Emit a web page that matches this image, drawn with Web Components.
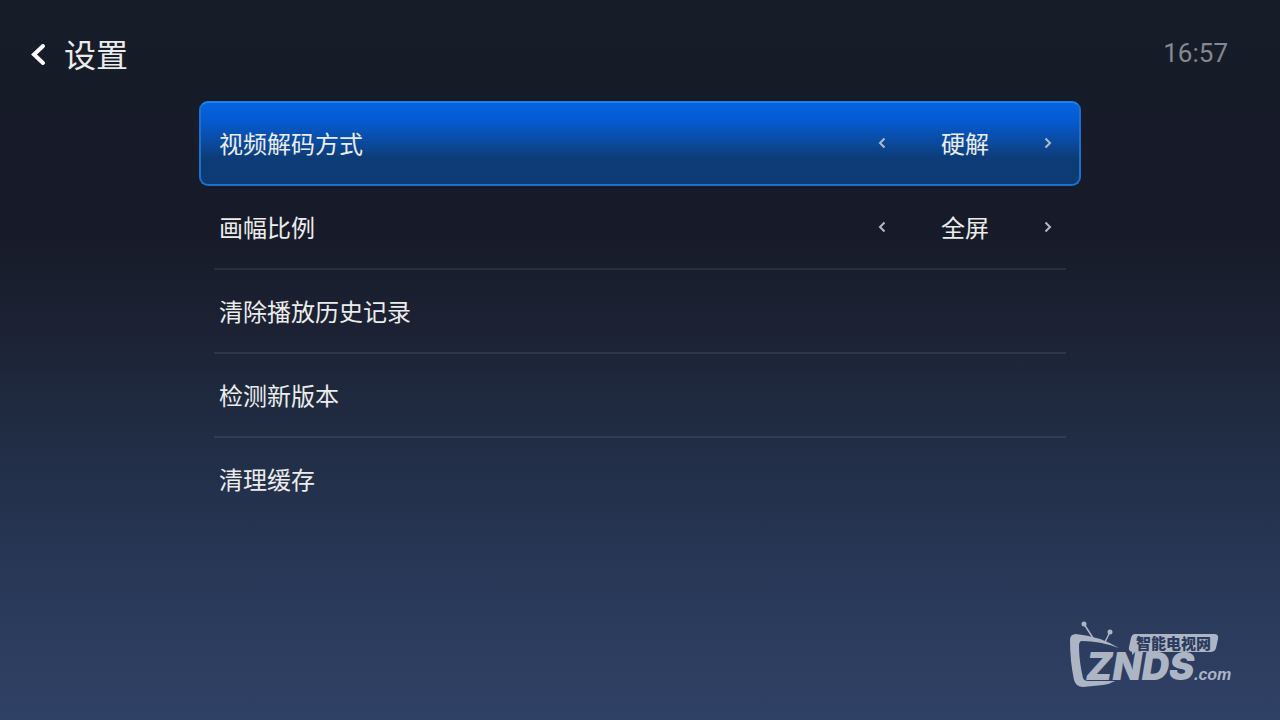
<!DOCTYPE html>
<html lang="zh-CN">
<head>
<meta charset="utf-8">
<meta name="viewport" content="width=device-width, initial-scale=1">
<title>设置</title>
<style>
  body {
    margin: 0;
    background: #171c29;
    color: #ececec;
    font-family: Roboto, 'Noto Sans CJK SC', sans-serif;
  }
</style>
</head>
<body>
<tv-screen>
  <tv-header slot="header" heading="设置" time="16:57"></tv-header>
  <setting-row label="视频解码方式" options="硬解,软解" selected></setting-row>
  <setting-row label="画幅比例" options="全屏,原始"></setting-row>
  <setting-row label="清除播放历史记录"></setting-row>
  <setting-row label="检测新版本"></setting-row>
  <setting-row label="清理缓存" last></setting-row>
  <znds-logo slot="footer"></znds-logo>
</tv-screen>

<script>
class TvScreen extends HTMLElement {
  constructor() {
    super();
    this.attachShadow({ mode: 'open' });
    this.shadowRoot.innerHTML = `
      <style>
        :host {
          display: flex;
          flex-direction: column;
          box-sizing: border-box;
          min-height: 100vh;
          background: linear-gradient(#171c29 0%, #171b29 32%, #1c2234 46%, #1f2a3f 56%, #24324e 70%, #2b3b5c 86%, #304166 100%);
        }

        main {
          display: flex;
          flex-direction: column;
          box-sizing: border-box;
          width: 100%;
          max-width: 882px;
          margin: 0 auto;
        }

        footer {
          display: flex;
          justify-content: flex-end;
          margin-top: auto;
          padding: 0 44px 32px;
        }
      </style>
      <slot name="header"></slot>
      <main><slot></slot></main>
      <footer><slot name="footer"></slot></footer>
    `;
  }
}

class TvHeader extends HTMLElement {
  constructor() {
    super();
    this.attachShadow({ mode: 'open' });
  }

  connectedCallback() {
    this.shadowRoot.innerHTML = `
      <style>
        :host {
          display: flex;
          align-items: center;
          justify-content: space-between;
          box-sizing: border-box;
          height: 101px;
          padding: 0 52px 0 28px;
        }

        .title {
          display: flex;
          align-items: center;
          gap: 16px;
          padding-top: 8px;
        }

        button {
          display: flex;
          padding: 0 0 2px;
          border: none;
          background: none;
          color: #fff;
          cursor: pointer;
        }

        h1 {
          margin: 0;
          padding-top: 2px;
          font-size: 32px;
          font-weight: 400;
          line-height: 40px;
        }

        time {
          padding-top: 4px;
          color: #85888f;
          font-size: 26px;
          line-height: 32px;
        }
      </style>
      <div class="title">
        <button type="button" aria-label="返回">
          <svg width="20" height="24" viewBox="0 0 20 24">
            <path d="M15 4 L6 12.500 L15 21" fill="none" stroke="currentColor" stroke-width="4" stroke-linecap="round" stroke-linejoin="miter"/>
          </svg>
        </button>
        <h1>${this.getAttribute('heading')}</h1>
      </div>
      <time>${this.getAttribute('time')}</time>
    `;
  }
}

class OptionPicker extends HTMLElement {
  constructor() {
    super();
    this._options = [];
    this._index = 0;
    this.attachShadow({ mode: 'open' });
    this.shadowRoot.innerHTML = `
      <style>
        :host {
          display: flex;
          align-items: center;
          justify-content: space-between;
          width: 190px;
        }

        button {
          display: flex;
          align-items: center;
          justify-content: center;
          width: 24px;
          height: 32px;
          padding: 0 0 4px;
          border: none;
          background: none;
          color: #b4b9c4;
          cursor: pointer;
        }

        path {
          fill: none;
          stroke: currentColor;
          stroke-width: 2;
        }
      </style>
      <button type="button" class="prev" aria-label="上一项">
        <svg width="8" height="12" viewBox="0 0 8 12"><path d="M6.500 1.500 L2 6 L6.500 10.500"/></svg>
      </button>
      <output></output>
      <button type="button" class="next" aria-label="下一项">
        <svg width="8" height="12" viewBox="0 0 8 12"><path d="M1.500 1.500 L6 6 L1.500 10.500"/></svg>
      </button>
    `;
  }

  connectedCallback() {
    this._options = this.getAttribute('options').split(',');
    this.shadowRoot.querySelector('.prev').addEventListener('click', () => this._step(-1));
    this.shadowRoot.querySelector('.next').addEventListener('click', () => this._step(1));
    this._render();
  }

  _step(by) {
    const count = this._options.length;
    this._index = (this._index + by + count) % count;
    this._render();
  }

  _render() {
    this.shadowRoot.querySelector('output').textContent = this._options[this._index];
  }
}

class SettingRow extends HTMLElement {
  constructor() {
    super();
    this.attachShadow({ mode: 'open' });
  }

  connectedCallback() {
    const label = this.getAttribute('label');
    const options = this.getAttribute('options');
    const body = options
      ? `<span>${label}</span><option-picker role="group" aria-label="${label}" options="${options}"></option-picker>`
      : `<button type="button">${label}</button>`;

    this.shadowRoot.innerHTML = `
      <style>
        :host {
          display: block;
          font-size: 24px;
          line-height: 32px;
        }

        .row {
          display: flex;
          align-items: center;
          justify-content: space-between;
          box-sizing: border-box;
          height: 84px;
          margin: 0 15px;
          padding: 4px 6px 0 5px;
          border-bottom: 2px solid rgba(255, 255, 255, 0.08);
        }

        :host([last]) .row {
          border-color: transparent;
        }

        :host([selected]) .row {
          height: 85px;
          margin: 0;
          padding: 3px 19px 0 18px;
          border: 2px solid #1d6fd0;
          border-top-color: #2380f0;
          border-radius: 9px;
          background: linear-gradient(#0463e2 0%, #055bd0 22%, #0a4ba0 48%, #0d3c76 68%, #0e3b74 100%);
        }

        button {
          flex: 1;
          padding: 0;
          border: none;
          background: none;
          color: inherit;
          font: inherit;
          text-align: left;
          cursor: pointer;
        }
      </style>
      <div class="row">${body}</div>
    `;
  }
}

class ZndsLogo extends HTMLElement {
  constructor() {
    super();
    this.attachShadow({ mode: 'open' });
    this.shadowRoot.innerHTML = `
      <style>
        :host {
          display: block;
        }

        svg {
          display: block;
        }

        .ink {
          fill: #adb5c5;
        }

        .badge {
          fill: #2c3c5e;
          font: 900 15px 'Noto Sans CJK SC', sans-serif;
        }

        .name {
          font: italic 900 38px Inter, sans-serif;
        }

        .domain {
          font: italic 700 16px 'Liberation Sans', sans-serif;
        }
      </style>
      <svg width="168" height="70" viewBox="0 0 168 70" role="img" aria-label="ZNDS.com 智能电视网">
        <g class="ink">
          <!-- antennas -->
          <circle cx="16" cy="6" r="2.500"/>
          <circle cx="42" cy="14" r="2.500"/>
          <path d="M16 6 L25 20 M42 14 L37 24" stroke="#adb5c5" stroke-width="1.500"/>
          <!-- tv shell -->
          <path d="M2 22 Q2 16 8 16 Q31 18 51 30 Q32 23 14 23 Q11 23 11 28 Q11 43 15 60 Q16 63 20 63 Q34 63 47 63 Q42 66 35 67 L15 69 Q8 69 6 62 Q2 43 2 22 Z"/>
          <!-- speech badge -->
          <path d="M67 16 H146 Q151 16 150 21 L148 30 Q147 34 142 34 H67 L64 37 L64 34 Q60 33 61 29 L63 20 Q64 16 67 16 Z"/>
          <text class="name" x="18" y="62">ZNDS</text>
          <text class="domain" x="126" y="62">.com</text>
        </g>
        <text class="badge" x="68" y="31">智能电视网</text>
      </svg>
    `;
  }
}

customElements.define('tv-screen', TvScreen);
customElements.define('tv-header', TvHeader);
customElements.define('option-picker', OptionPicker);
customElements.define('setting-row', SettingRow);
customElements.define('znds-logo', ZndsLogo);
</script>
</body>
</html>
